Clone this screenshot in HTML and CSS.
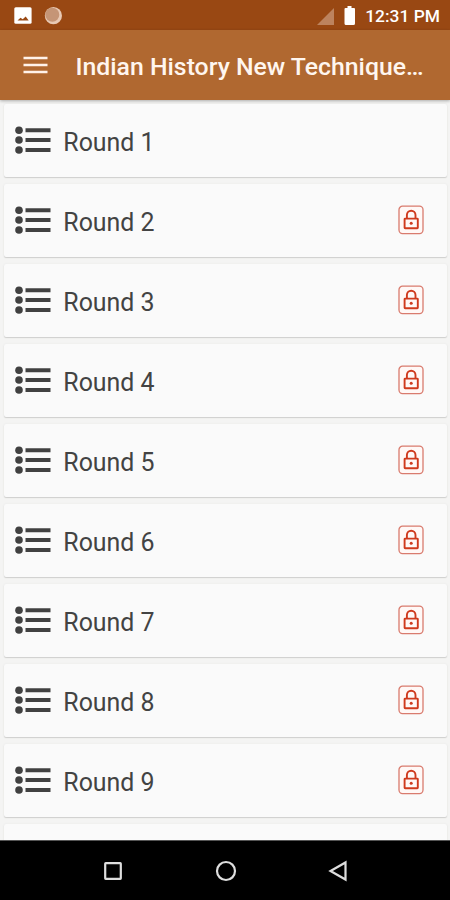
FILE: index.html
```
<!DOCTYPE html>
<html lang="en">
<head>
<meta charset="utf-8">
<title>Indian History</title>
<link rel="stylesheet" href="styles.css">
</head>
<body>
<svg class="defs" aria-hidden="true">
  <symbol id="list" viewBox="0 0 36 28">
    <g fill="#414141"><circle cx="4" cy="4.2" r="3.8"/><circle cx="4" cy="14" r="3.8"/><circle cx="4" cy="24" r="3.8"/>
    <path d="M10.500 2.300h25v4h-25zM10.500 12h25v4h-25zM10.500 22h25v4h-25z"/></g>
  </symbol>
  <symbol id="lock" viewBox="0 0 26 30">
    <rect x="1" y="1.2" width="24" height="27.4" rx="3.5" fill="#fff8f6" stroke="#d97b6e" stroke-width="1.3"/>
    <g fill="none" stroke="#cf3a1d" stroke-width="1.9"><rect x="6.6" y="13.6" width="13.2" height="9.6" rx=".5"/><path d="M8.900 13.500V10a4.300 4.300 0 0 1 8.600 0v3.500"/></g>
    <circle cx="13.2" cy="18.2" r="1.5" fill="#cf3a1d"/>
  </symbol>
</svg>
<div class="screen">
  <header class="status">
    <svg class="notices" width="52" height="30" viewBox="0 0 52 30">
      <rect x=".3" y="7.3" width="17.3" height="16.4" rx="1.5" fill="#fff"/>
      <path d="M3.500 20.500l3-2.700 2.200 1.500 3-2.900 3 4.100z" fill="#994813"/>
      <circle cx="39.400" cy="15.700" r="8.600" fill="#e8c9b4"/>
      <circle cx="38.300" cy="14.800" r="7" fill="#c59576"/>
    </svg>
    <div class="system">
      <svg width="40" height="30" viewBox="0 0 40 30">
        <path d="M0 25L17 8v17z" fill="#bd835e"/>
        <path d="M30.500 6h4v2H37q1 0 1 1v14.500q0 1.500-1.500 1.500h-7.500q-1.500 0-1.500-1.500V9q0-1 1-1h2z" fill="#fff"/>
      </svg>
      <span class="clock">12:31 PM</span>
    </div>
  </header>
  <div class="appbar">
    <svg class="menu" width="25" height="18" viewBox="0 0 25 18"><path d="M.5 2h24M.5 9h24M.5 16h24" stroke="#fff2e9" stroke-width="2.6"/></svg>
    <h1>Indian History New Technique…</h1>
  </div>
  <main class="rounds">
    <div class="card"><svg class="list"><use href="#list"/></svg><span>Round 1</span></div>
    <div class="card"><svg class="list"><use href="#list"/></svg><span>Round 2</span><svg class="lock"><use href="#lock"/></svg></div>
    <div class="card"><svg class="list"><use href="#list"/></svg><span>Round 3</span><svg class="lock"><use href="#lock"/></svg></div>
    <div class="card"><svg class="list"><use href="#list"/></svg><span>Round 4</span><svg class="lock"><use href="#lock"/></svg></div>
    <div class="card"><svg class="list"><use href="#list"/></svg><span>Round 5</span><svg class="lock"><use href="#lock"/></svg></div>
    <div class="card"><svg class="list"><use href="#list"/></svg><span>Round 6</span><svg class="lock"><use href="#lock"/></svg></div>
    <div class="card"><svg class="list"><use href="#list"/></svg><span>Round 7</span><svg class="lock"><use href="#lock"/></svg></div>
    <div class="card"><svg class="list"><use href="#list"/></svg><span>Round 8</span><svg class="lock"><use href="#lock"/></svg></div>
    <div class="card"><svg class="list"><use href="#list"/></svg><span>Round 9</span><svg class="lock"><use href="#lock"/></svg></div>
    <div class="card"></div>
  </main>
  <nav class="navbar">
    <svg width="20" height="22" viewBox="0 0 20 22"><rect x="2.200" y="3.200" width="15.600" height="15.600" rx=".5"/></svg>
    <svg width="22" height="22" viewBox="0 0 22 22"><circle cx="11" cy="11" r="9"/></svg>
    <svg width="20" height="22" viewBox="0 0 20 22"><path d="M17.500 2.500v17L2.500 11z"/></svg>
  </nav>
</div>
</body>
</html>
```
FILE: styles.css
```
* { box-sizing: border-box; }
body { margin: 0; font-family: Roboto, sans-serif; }
svg { display: block; flex: none; }
.defs { display: none; }
.screen { width: 450px; height: 900px; display: flex; flex-direction: column; overflow: hidden; background: #f4f4f3; }
.status { height: 30px; flex: none; background: #994813; display: flex; justify-content: space-between; padding: 0 10px 0 14px; }
.system { display: flex; gap: 8.5px; }
.clock { color: #fff; font-size: 17.4px; font-weight: 500; line-height: 33px; white-space: nowrap; }
.appbar { height: 70px; flex: none; background: #b06830; display: flex; align-items: center; padding-left: 23px; z-index: 1; box-shadow: 0 1px 3px rgba(0, 0, 0, .3); }
.menu { margin-top: -1px; }
h1 { margin: 4px 0 0 27.5px; color: #fff6ef; font-size: 24.8px; font-weight: 500; line-height: 30px; white-space: nowrap; }
.rounds { flex: 1; min-height: 0; overflow: hidden; padding: 4px 3px 0 4px; display: flex; flex-direction: column; gap: 7px; }
.card { height: 73px; flex: none; background: #fafafa; border-radius: 2px; box-shadow: 0 1px 1px #cfcfce, 0 0 2px #e6e6e5; display: flex; align-items: center; padding: 0 23px 0 11px; }
.card span { margin: 4px 0 0 12.3px; font-size: 24.9px; line-height: 31px; color: #434343; white-space: nowrap; }
.list { width: 36px; height: 28px; margin-top: -1px; }
.lock { width: 26px; height: 30px; margin: -1px 0 0 auto; }
.navbar { height: 60px; flex: none; background: #000; border-top: 1px solid #555; display: flex; align-items: center; justify-content: space-between; padding: 0 102px 0 103px; }
.navbar svg { fill: none; stroke: #dedede; stroke-width: 2.2; }
```
